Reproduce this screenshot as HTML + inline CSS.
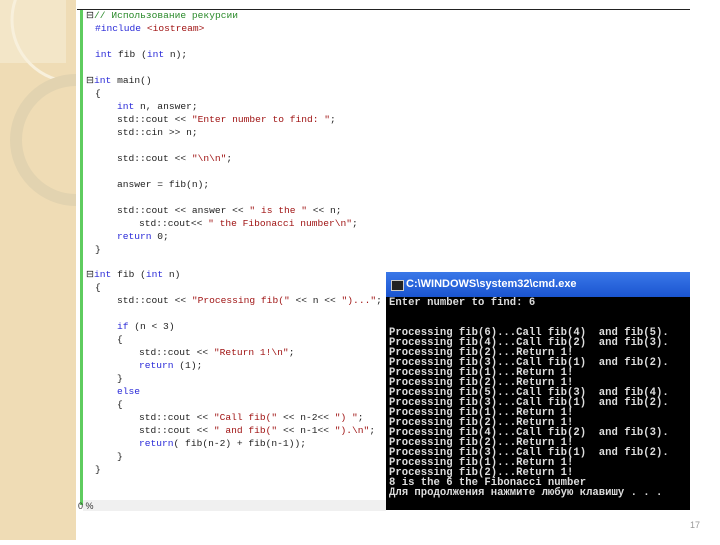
<!DOCTYPE html><html><head><style>
body{margin:0;width:720px;height:540px;background:#fff;position:relative;overflow:hidden;font-family:"Liberation Mono",monospace}
.side{position:absolute;left:0;top:0;width:76px;height:540px;background:#efdcb5}
.code{position:absolute;left:0;top:0;font-size:9.6px;color:#222;white-space:pre}
.code div{position:absolute;white-space:pre}
.k{color:#2a2ad8}.s{color:#a01515}.c{color:#2a8a2a}
.con{position:absolute;left:386px;top:272px;width:304px;height:238px;background:#000}
.tb{height:25px;background:linear-gradient(#3a78e8,#1a54d0);color:#fff;font:bold 11px "Liberation Sans",sans-serif;line-height:25px;padding-left:20px;position:relative}
.tb:before{content:"";position:absolute;left:5px;top:8px;width:11px;height:9px;background:#222;border:1px solid #ccc}
.ct{position:absolute;left:3px;top:26px;color:#ddd;font:bold 10.6px "Liberation Mono",monospace;line-height:10px;white-space:pre}
</style></head><body>
<div class="side">
<svg width="76" height="540"><rect x="0" y="0" width="66" height="63" fill="#f3e6c8"/><circle cx="74" cy="20" r="62" fill="none" stroke="#f8f0dc" stroke-width="3"/><circle cx="76" cy="140" r="60" fill="none" stroke="#e2d3b0" stroke-width="12"/></svg>
</div>
<div style="position:absolute;left:77px;top:9px;width:613px;height:1px;background:#222"></div>
<div style="position:absolute;left:80px;top:10px;width:3px;height:495px;background:#5fcc5f"></div>
<div style="position:absolute;left:83px;top:500px;width:303px;height:11px;background:#f0f0f0"></div>
<div style="position:absolute;left:78px;top:501px;font:9px 'Liberation Sans',sans-serif;color:#333">0 %</div>
<div class="code">
<div style="left:86px;top:10px">⊟<span class="c">// Использование рекурсии</span></div>
<div style="left:95px;top:23px"><span class="k">#include</span> <span class="s">&lt;iostream&gt;</span></div>
<div style="left:95px;top:49px"><span class="k">int</span> fib (<span class="k">int</span> n);</div>
<div style="left:86px;top:75px">⊟<span class="k">int</span> main()</div>
<div style="left:95px;top:88px">{</div>
<div style="left:117px;top:101px"><span class="k">int</span> n, answer;</div>
<div style="left:117px;top:114px">std::cout &lt;&lt; <span class="s">"Enter number to find: "</span>;</div>
<div style="left:117px;top:127px">std::cin &gt;&gt; n;</div>
<div style="left:117px;top:153px">std::cout &lt;&lt; <span class="s">"\n\n"</span>;</div>
<div style="left:117px;top:179px">answer = fib(n);</div>
<div style="left:117px;top:205px">std::cout &lt;&lt; answer &lt;&lt; <span class="s">" is the "</span> &lt;&lt; n;</div>
<div style="left:139px;top:218px">std::cout&lt;&lt; <span class="s">" the Fibonacci number\n"</span>;</div>
<div style="left:117px;top:231px"><span class="k">return</span> 0;</div>
<div style="left:95px;top:244px">}</div>
<div style="left:86px;top:269px">⊟<span class="k">int</span> fib (<span class="k">int</span> n)</div>
<div style="left:95px;top:282px">{</div>
<div style="left:117px;top:295px">std::cout &lt;&lt; <span class="s">"Processing fib("</span> &lt;&lt; n &lt;&lt; <span class="s">")..."</span>;</div>
<div style="left:117px;top:321px"><span class="k">if</span> (n &lt; 3)</div>
<div style="left:117px;top:334px">{</div>
<div style="left:139px;top:347px">std::cout &lt;&lt; <span class="s">"Return 1!\n"</span>;</div>
<div style="left:139px;top:360px"><span class="k">return</span> (1);</div>
<div style="left:117px;top:373px">}</div>
<div style="left:117px;top:386px"><span class="k">else</span></div>
<div style="left:117px;top:399px">{</div>
<div style="left:139px;top:412px">std::cout &lt;&lt; <span class="s">"Call fib("</span> &lt;&lt; n-2&lt;&lt; <span class="s">") "</span>;</div>
<div style="left:139px;top:425px">std::cout &lt;&lt; <span class="s">" and fib("</span> &lt;&lt; n-1&lt;&lt; <span class="s">").\n"</span>;</div>
<div style="left:139px;top:438px"><span class="k">return</span>( fib(n-2) + fib(n-1));</div>
<div style="left:117px;top:451px">}</div>
<div style="left:95px;top:464px">}</div>
</div>
<div class="con"><div class="tb">C:\WINDOWS\system32\cmd.exe</div>
<div class="ct">Enter number to find: 6


Processing fib(6)...Call fib(4)  and fib(5).
Processing fib(4)...Call fib(2)  and fib(3).
Processing fib(2)...Return 1!
Processing fib(3)...Call fib(1)  and fib(2).
Processing fib(1)...Return 1!
Processing fib(2)...Return 1!
Processing fib(5)...Call fib(3)  and fib(4).
Processing fib(3)...Call fib(1)  and fib(2).
Processing fib(1)...Return 1!
Processing fib(2)...Return 1!
Processing fib(4)...Call fib(2)  and fib(3).
Processing fib(2)...Return 1!
Processing fib(3)...Call fib(1)  and fib(2).
Processing fib(1)...Return 1!
Processing fib(2)...Return 1!
8 is the 6 the Fibonacci number
Для продолжения нажмите любую клавишу . . .</div></div>
<div style="position:absolute;left:690px;top:520px;font:9px 'Liberation Sans',sans-serif;color:#999">17</div>
</body></html>
